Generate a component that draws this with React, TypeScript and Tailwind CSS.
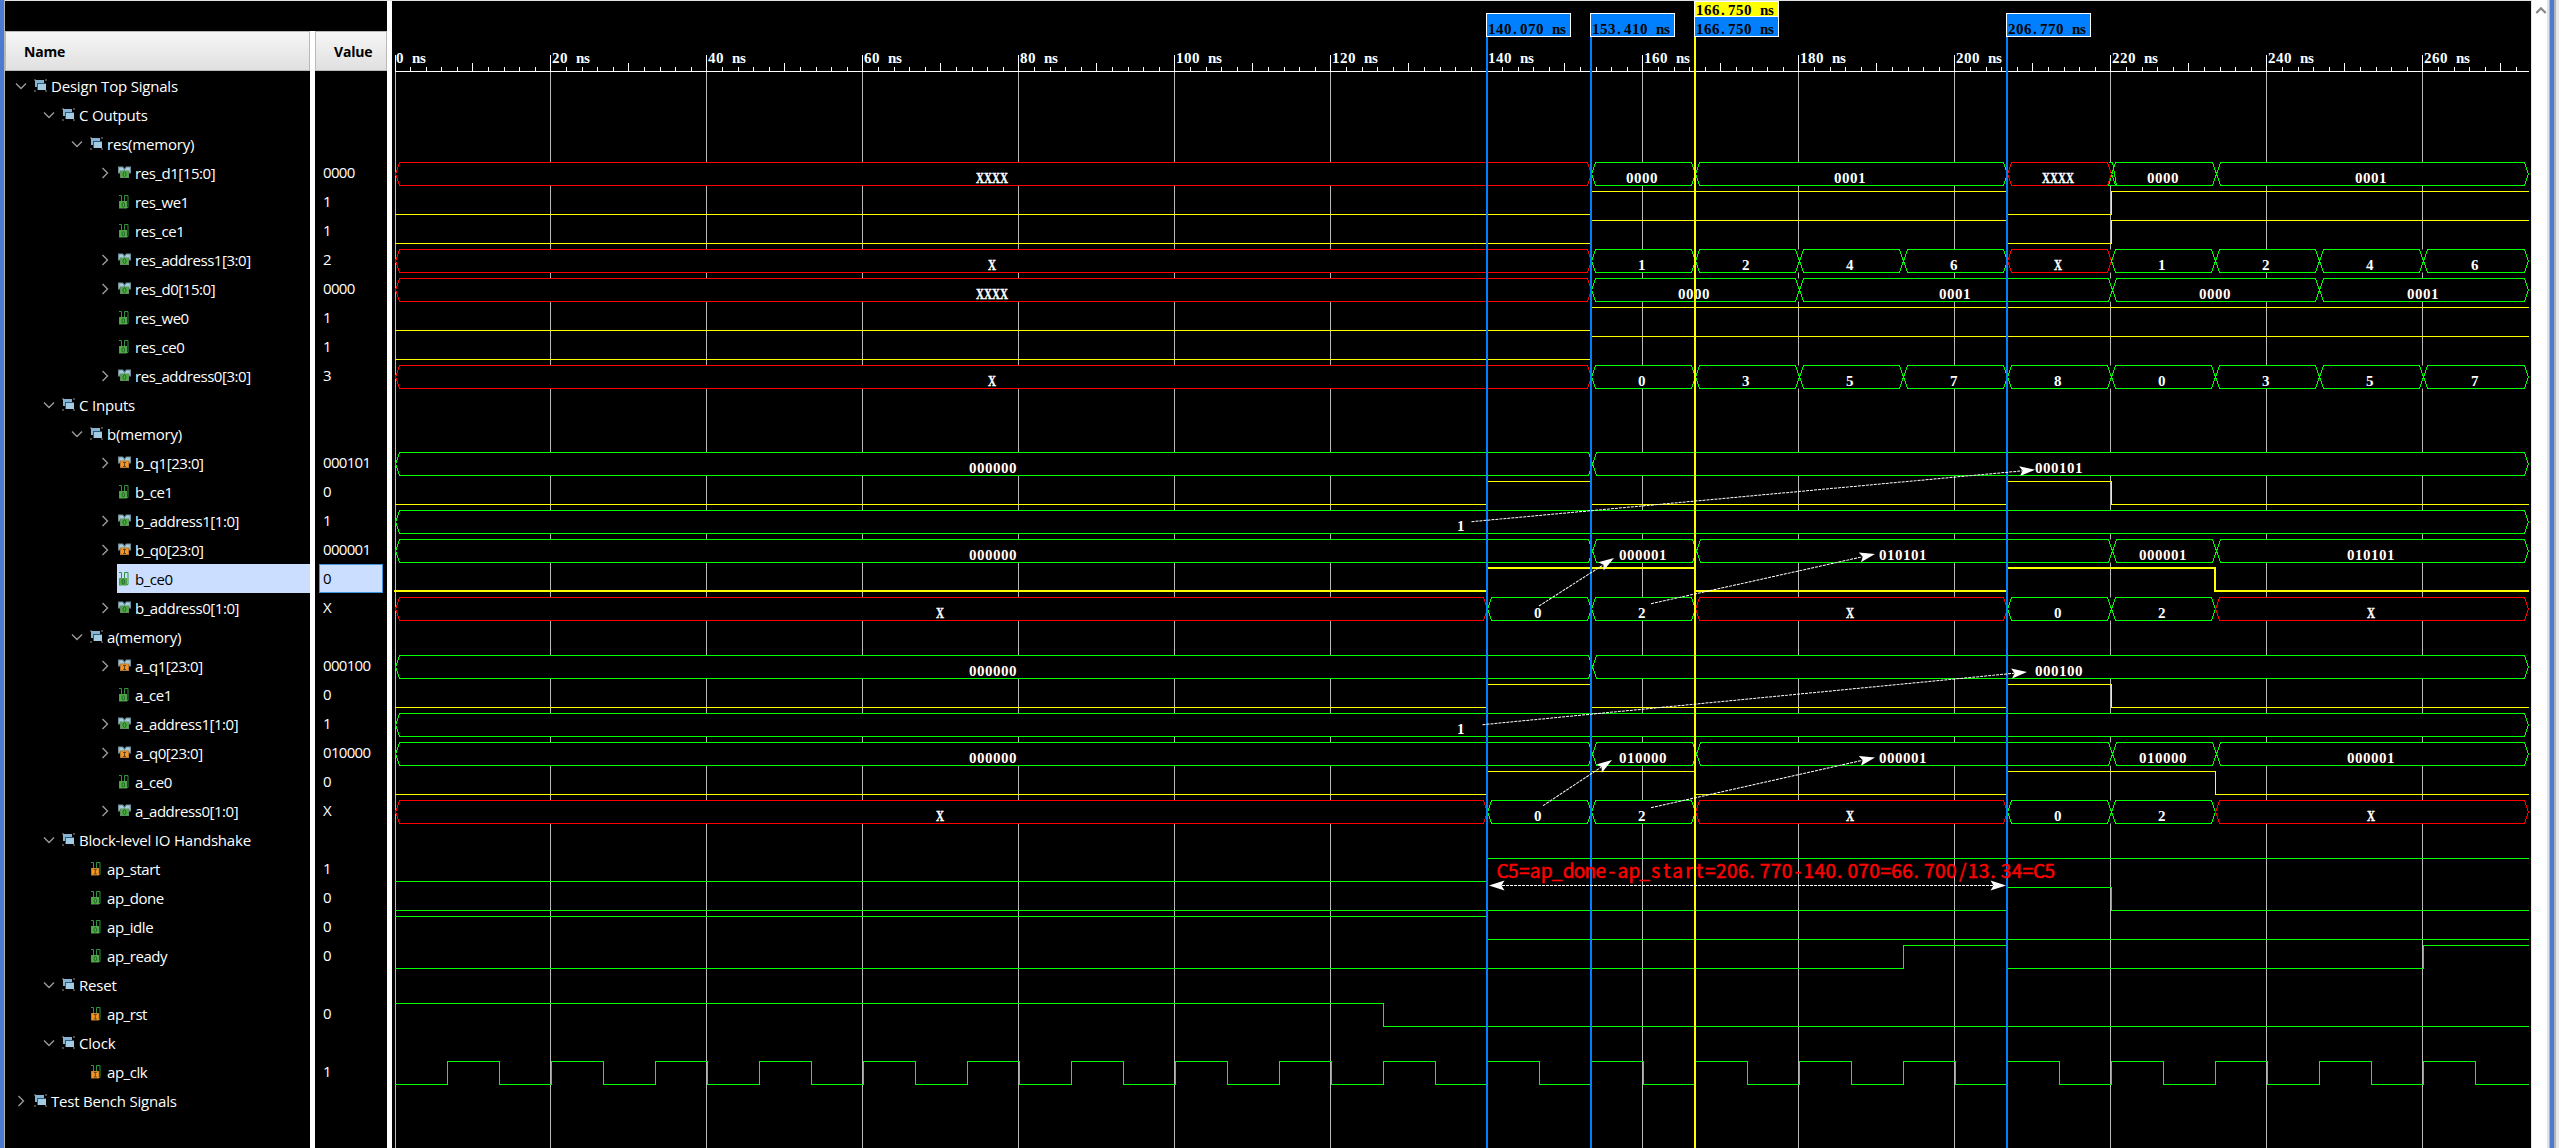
import React from "react";

type Icon = "group" | "busOut" | "busIn" | "bitOut" | "bitIn";
type Seg = { end: number; v: string; x?: boolean };
type Row = {
  name: string;
  level: number;
  icon: Icon;
  value?: string;
  open?: boolean;
  closed?: boolean;
  selected?: boolean;
  bus?: Seg[];
  bit?: { color: string; init: 0 | 1; edges: number[] };
};

const X0 = 395;
const END = 2529;
const ROW_H = 29;
const ROW_TOP = 71;
const GREEN = "#00ff00";
const RED = "#ff0000";
const YELLOW = "#ffff00";
const GRID = "#b9b9b9";

const seg = (end: number, v: string): Seg => ({ end, v, x: v.startsWith("X") });
const yBit = (init: 0 | 1, ...edges: number[]) => ({ color: YELLOW, init, edges });
const gBit = (init: 0 | 1, ...edges: number[]) => ({ color: GREEN, init, edges });
const addr0 = [
  seg(1487, "X"), seg(1591, "0"), seg(1695, "2"), seg(2007, "X"),
  seg(2111, "0"), seg(2215, "2"), seg(END, "X"),
];
const q0 = (p: string, q: string) => [
  seg(1592, "000000"), seg(1696, p), seg(2112, q), seg(2216, p), seg(END, q),
];
const steps = (vals: string[]) =>
  vals.map((v, i) => seg(i === vals.length - 1 ? END : 1591 + 104 * i, v));

const rows: Row[] = [
  { name: "Design Top Signals", level: 0, icon: "group", open: true },
  { name: "C Outputs", level: 1, icon: "group", open: true },
  { name: "res(memory)", level: 2, icon: "group", open: true },
  {
    name: "res_d1[15:0]", level: 3, icon: "busOut", closed: true, value: "0000",
    bus: [seg(1591, "XXXX"), seg(1695, "0000"), seg(2007, "0001"), seg(2111, "XXXX"), seg(2216, "0000"), seg(END, "0001")],
  },
  { name: "res_we1", level: 3, icon: "bitOut", value: "1", bit: yBit(0, 1591, 2007, 2111) },
  { name: "res_ce1", level: 3, icon: "bitOut", value: "1", bit: yBit(0, 1591, 2007, 2111) },
  {
    name: "res_address1[3:0]", level: 3, icon: "busOut", closed: true, value: "2",
    bus: steps(["X", "1", "2", "4", "6", "X", "1", "2", "4", "6"]),
  },
  {
    name: "res_d0[15:0]", level: 3, icon: "busOut", closed: true, value: "0000",
    bus: [seg(1591, "XXXX"), seg(1799, "0000"), seg(2112, "0001"), seg(2319, "0000"), seg(END, "0001")],
  },
  { name: "res_we0", level: 3, icon: "bitOut", value: "1", bit: yBit(0, 1591) },
  { name: "res_ce0", level: 3, icon: "bitOut", value: "1", bit: yBit(0, 1591) },
  {
    name: "res_address0[3:0]", level: 3, icon: "busOut", closed: true, value: "3",
    bus: steps(["X", "0", "3", "5", "7", "8", "0", "3", "5", "7"]),
  },
  { name: "C Inputs", level: 1, icon: "group", open: true },
  { name: "b(memory)", level: 2, icon: "group", open: true },
  { name: "b_q1[23:0]", level: 3, icon: "busIn", closed: true, value: "000101", bus: [seg(1592, "000000"), seg(END, "000101")] },
  { name: "b_ce1", level: 3, icon: "bitOut", value: "0", bit: yBit(0, 1487, 1591, 2007, 2111) },
  { name: "b_address1[1:0]", level: 3, icon: "busOut", closed: true, value: "1", bus: [seg(END, "1")] },
  { name: "b_q0[23:0]", level: 3, icon: "busIn", closed: true, value: "000001", bus: q0("000001", "010101") },
  { name: "b_ce0", level: 3, icon: "bitOut", value: "0", selected: true, bit: yBit(0, 1487, 1695, 2007, 2215) },
  { name: "b_address0[1:0]", level: 3, icon: "busOut", closed: true, value: "X", bus: addr0 },
  { name: "a(memory)", level: 2, icon: "group", open: true },
  { name: "a_q1[23:0]", level: 3, icon: "busIn", closed: true, value: "000100", bus: [seg(1592, "000000"), seg(END, "000100")] },
  { name: "a_ce1", level: 3, icon: "bitOut", value: "0", bit: yBit(0, 1487, 1591, 2007, 2111) },
  { name: "a_address1[1:0]", level: 3, icon: "busOut", closed: true, value: "1", bus: [seg(END, "1")] },
  { name: "a_q0[23:0]", level: 3, icon: "busIn", closed: true, value: "010000", bus: q0("010000", "000001") },
  { name: "a_ce0", level: 3, icon: "bitOut", value: "0", bit: yBit(0, 1487, 1695, 2007, 2215) },
  { name: "a_address0[1:0]", level: 3, icon: "busOut", closed: true, value: "X", bus: addr0 },
  { name: "Block-level IO Handshake", level: 1, icon: "group", open: true },
  { name: "ap_start", level: 2, icon: "bitIn", value: "1", bit: gBit(0, 1487) },
  { name: "ap_done", level: 2, icon: "bitOut", value: "0", bit: gBit(0, 2007, 2111) },
  { name: "ap_idle", level: 2, icon: "bitOut", value: "0", bit: gBit(1, 1487) },
  { name: "ap_ready", level: 2, icon: "bitOut", value: "0", bit: gBit(0, 1903, 2007, 2423) },
  { name: "Reset", level: 1, icon: "group", open: true },
  { name: "ap_rst", level: 2, icon: "bitIn", value: "0", bit: gBit(1, 1383) },
  { name: "Clock", level: 1, icon: "group", open: true },
  {
    name: "ap_clk", level: 2, icon: "bitIn", value: "1",
    bit: gBit(0, ...Array.from({ length: 40 }, (_, i) => X0 + 52 * (i + 1))),
  },
  { name: "Test Bench Signals", level: 0, icon: "group", closed: true },
];

function SignalIcon({ icon }: { icon: Icon }) {
  if (icon === "group") {
    return (
      <svg width="13" height="13" viewBox="0 0 13 13" className="shrink-0">
        <path d="M0 0h2v2H0zM11 0h2v2h-2zM0 11h2v2H0zM11 11h2v2h-2z" fill="#4a4a4a" />
        <rect x="1" y="1" width="9" height="7" fill="#86b3d1" />
        <rect x="3" y="4" width="9" height="7" fill="#2f5878" />
        <rect x="4" y="5" width="8" height="6" fill="#a3cbe2" />
      </svg>
    );
  }
  const out = icon === "busOut" || icon === "bitOut";
  const fill = out ? "#4caf3f" : "#f7941d";
  const edge = out ? "#5d8f5f" : "#b87a30";
  const ink = out ? "#25602a" : "#5a4630";
  if (icon === "busOut" || icon === "busIn") {
    return (
      <svg width="13" height="13" viewBox="0 0 13 13" className="shrink-0">
        <path d="M0 .5h5l1.5 2 1.5-2h5v7h-2v2H2v-2H0z" fill="#6f8b96" />
        <path d="M1.2 1.5h3.2l1.6 2.3v2H1.2zM11.8 1.5H8.600L7 3.800v2h4.800z" fill="#a5cde0" />
        <rect x="2" y="4.500" width="9" height="7.500" fill={edge} />
        <rect x="3" y="5.500" width="7" height="5.500" fill={fill} />
        {out ? (
          <ellipse cx="6.500" cy="8.200" rx="1.500" ry="2.300" fill="none" stroke={ink} />
        ) : (
          <path d="M5 6.500h3M6.500 6.500v4M5 10.500h3" stroke={ink} fill="none" />
        )}
      </svg>
    );
  }
  return (
    <svg width="13" height="14" viewBox="0 0 13 14" className="shrink-0">
      <path d="M1 .5h2.500v6M6.500 7V.5h3.500v12H8" fill="none" stroke="#2f9440" />
      <rect x="1" y="6" width="8" height="7.500" fill={edge} />
      <rect x="2" y="6.500" width="6.500" height="6.500" fill={fill} />
      {out ? (
        <ellipse cx="5.300" cy="9.800" rx="1.300" ry="2.300" fill="none" stroke={ink} />
      ) : (
        <path d="M3.800 7.500h3M5.300 7.500v4.500M3.800 12h3" stroke={ink} fill="none" />
      )}
    </svg>
  );
}

function Chevron({ open }: { open: boolean }) {
  return (
    <svg width="12" height="12" viewBox="0 0 12 12" className="shrink-0">
      <path
        d={open ? "M1 3.500l5 5 5-5" : "M3.500 1l5 5-5 5"}
        fill="none" stroke="#9a9a9a" strokeWidth="1.400"
      />
    </svg>
  );
}

const PADS = ["pl-[10px]", "pl-[38px]", "pl-[66px]", "pl-[94px]"];

function NameRow({ row }: { row: Row }) {
  return (
    <div className={`flex h-[29px] items-stretch ${PADS[row.level]}`}>
      <div className="flex w-[18px] shrink-0 items-center">
        {(row.open || row.closed) && <Chevron open={!!row.open} />}
      </div>
      <div
        className={`flex grow items-center gap-[4px] pl-[1px] whitespace-pre ${
          row.selected ? "bg-[#cbdeff] text-black" : "text-white"
        }`}
      >
        <SignalIcon icon={row.icon} />
        <span className={`pt-[1px] leading-[20px] ${row.icon === "group" ? "tracking-[-0.2px]" : "tracking-[-0.45px]"}`}>
          {row.name}
        </span>
      </div>
    </div>
  );
}

function ValueRow({ row }: { row: Row }) {
  return (
    <div className="flex h-[29px] pr-[4px] pl-[4px]">
      <div
        className={`flex grow items-center border pl-[3px] tracking-[-0.7px] ${
          row.selected ? "border-[#3f94dc] bg-[#cbdeff] text-black" : "border-transparent text-white"
        }`}
      >
        {row.value}
      </div>
    </div>
  );
}

/** Text on an 8px character grid. */
function CellText({ x, y, children, fill = "#fff" }: { x: number; y: number; children: string; fill?: string }) {
  const xs = children.split("").map((c, i) => x + i * 8 + (c === "." ? 1 : 0)).join(" ");
  return (
    <text x={xs} y={y} fill={fill} xmlSpace="preserve" className="font-['Liberation_Serif',serif] text-[15px] font-bold">
      {children}
    </text>
  );
}

function Bus({ top, segs }: { top: number; segs: Seg[] }) {
  const a = top + 4.5;
  const b = top + 27.5;
  const m = top + 16;
  return (
    <g>
      <rect x={X0 + 2} y={a} width={END - X0 - 4} height={23} fill="#000" />
      {segs.map((s, i) => {
        const l = (i ? segs[i - 1].end : X0) + 0.5;
        const r = s.end + (s.end === END ? -0.5 : 0.5);
        const w = s.v.length * 8;
        const cx = Math.floor((l + r) / 2) - 1;
        return (
          <g key={i}>
            <path
              d={`M${l} ${m}L${l + 4} ${a}H${r - 4}L${r} ${m}L${r - 4} ${b}H${l + 4}Z`}
              fill="none" stroke={s.x ? RED : GREEN} shapeRendering="crispEdges"
            />
            {s.x ? (
              <text
                x={cx - w / 2} y={top + 25} textLength={w} lengthAdjust="spacingAndGlyphs"
                fill="#fff" stroke="#fff" strokeWidth={0.4}
                className="font-['Liberation_Serif',serif] text-[15px] font-bold"
              >
                {s.v}
              </text>
            ) : (
              <CellText x={cx - w / 2} y={top + 25}>{s.v}</CellText>
            )}
          </g>
        );
      })}
    </g>
  );
}

function Bit({ top, bit, selected }: { top: number; bit: NonNullable<Row["bit"]>; selected?: boolean }) {
  const off = selected ? 0 : 0.5;
  let level = bit.init;
  const y = () => top + (level ? 4 : 27) + off;
  let d = `M${selected ? X0 - 1 : X0} ${y()}`;
  bit.edges.forEach((e) => {
    d += `H${e + off}`;
    level = level ? 0 : 1;
    d += `V${y()}`;
  });
  d += `H${END}`;
  return <path d={d} fill="none" stroke={bit.color} strokeWidth={selected ? 2 : 1} shapeRendering="crispEdges" />;
}

function Ruler() {
  const items: React.ReactNode[] = [];
  for (let n = 0; n < 14; n++) {
    const base = 394 + 156 * n;
    for (let k = 0; k < 10; k++) {
      const x = n === 0 && k === 0 ? X0 : base + Math.ceil(15.6 * k - 0.001);
      if (x > END) continue;
      const t = k === 0 ? 55 : k === 5 ? 63 : 67;
      items.push(<rect key={`${n}-${k}`} x={x} y={t} width={1} height={71 - t} fill="#fff" />);
    }
    items.push(<CellText key={`t${n}`} x={base + 2} y={63}>{`${n * 20} ns`}</CellText>);
  }
  return (
    <g>
      {items}
      <rect x={X0} y={71} width={END - X0} height={1} fill="#fff" />
    </g>
  );
}

function Arrow({ x1, y1, x2, y2, both }: { x1: number; y1: number; x2: number; y2: number; both?: boolean }) {
  const len = Math.hypot(x2 - x1, y2 - y1);
  const deg = (Math.atan2(y2 - y1, x2 - x1) * 180) / Math.PI;
  return (
    <g transform={`translate(${x1} ${y1}) rotate(${deg})`}>
      <path d={`M${both ? 13 : 0} 0H${len - 13}`} stroke="#fff" strokeDasharray="3 1" />
      <path d={`M${len} 0l-15.500-5 3 5-3 5z`} fill="#fff" />
      {both && <path d="M0 0l15.500-5-3 5 3 5z" fill="#fff" />}
    </g>
  );
}

function Marker({ x, label, top = 13 }: { x: number; label: string; top?: number }) {
  return (
    <g>
      <rect x={x} y={36} width={2} height={1112} fill="#0080ff" />
      <rect x={x + 0.5} y={top + 0.5} width={84} height={36 - top} fill="#0080ff" stroke="#fff" />
      <CellText x={x + 2} y={34} fill="#000">{label}</CellText>
    </g>
  );
}

const NOTE = "C5=ap_done-ap_start=206.770-140.070=66.700/13.34=C5";
const NOTE_SHIFT: Record<string, number> = { "-": 2, t: 2, r: 2, "/": 2, s: 1, ".": 0.5, C: -0.5 };

/** Red measurement note, one character per 10.95px cell. */
function Note() {
  const xs = NOTE.split("").map((c, i) => (1497 + i * 10.95 + (NOTE_SHIFT[c] ?? 0)).toFixed(2)).join(" ");
  return (
    <text
      x={xs} y={877.500} fill={RED} stroke={RED} strokeWidth={0.500}
      className="font-['Noto_Sans_CJK_SC',sans-serif] text-[19px]"
    >
      {NOTE}
    </text>
  );
}

function Waveform() {
  return (
    <svg width="2139" height="1147" viewBox="392 1 2139 1147" className="block shrink-0 bg-black">
      <rect x={X0} y={72} width={1} height={1076} fill={GRID} />
      {Array.from({ length: 13 }, (_, i) => (
        <rect key={i} x={550 + 156 * i} y={72} width={1} height={1076} fill={GRID} />
      ))}
      <Ruler />
      {rows.map((r, i) => {
        const top = ROW_TOP + ROW_H * i;
        if (r.bus) return <Bus key={i} top={top} segs={r.bus} />;
        if (r.bit) return <Bit key={i} top={top} bit={r.bit} selected={r.selected} />;
        return null;
      })}
      <path d="M2108.500 162.500h4l4 23h-8l7-23" fill="none" stroke={GREEN} shapeRendering="crispEdges" />
      <path d="M2107.500 162.500l4 11.500l-4 11.500" fill="none" stroke={RED} shapeRendering="crispEdges" />

      <Marker x={1486} label="140.070 ns" />
      <Marker x={1590} label="153.410 ns" />
      <Marker x={2006} label="206.770 ns" />
      <Marker x={1694} label="166.750 ns" top={16} />
      <rect x={1694.500} y={1.500} width={84} height={15} fill={YELLOW} stroke="#fff" />
      <CellText x={1696} y={15} fill="#000">166.750 ns</CellText>
      <rect x={1694} y={37} width={2} height={1111} fill={YELLOW} />

      <Arrow x1={1471.500} y1={521.700} x2={2035} y2={469.700} />
      <Arrow x1={1539} y1={606} x2={1614} y2={558} />
      <Arrow x1={1651} y1={603.700} x2={1875} y2={554} />
      <Arrow x1={1482.500} y1={724.700} x2={2027} y2={672} />
      <Arrow x1={1543} y1={805.700} x2={1612} y2={760} />
      <Arrow x1={1651} y1={807.700} x2={1875} y2={757.500} />
      <Arrow x1={1489} y1={885.500} x2={2006} y2={885.500} both />
      <Note />
    </svg>
  );
}

const HEADER =
  "flex h-[40px] items-center border border-[#b9b9b9] bg-linear-to-b from-[#f6f6f6] to-[#e0e0e0] text-[14px] font-bold tracking-[-0.2px] text-black";

export default function App() {
  return (
    <div className="flex h-[1148px] w-[2559px] overflow-hidden bg-black font-['Open_Sans','Noto_Sans',sans-serif] text-[15px]">
      <div className="w-[5px] shrink-0 border-r border-[#b5b5b5] bg-[#4b7bd1]" />
      <div className="flex w-[2526px] shrink-0 border-t border-[#e3e3e3]">
        <div className="w-[382px] shrink-0 pt-[30px]">
          <div className="flex h-[1117px]">
            <div className="w-[305px] shrink-0">
              <div className={`${HEADER} pl-[18px]`}>Name</div>
              {rows.map((r, i) => <NameRow key={i} row={r} />)}
            </div>
            <div className="w-[5px] shrink-0 bg-white" />
            <div className="w-[72px] shrink-0">
              <div className={`${HEADER} pl-[18px]`}>Value</div>
              {rows.map((r, i) => <ValueRow key={i} row={r} />)}
            </div>
          </div>
        </div>
        <div className="w-[5px] shrink-0 bg-white" />
        <Waveform />
      </div>
      <div className="flex w-[18px] shrink-0 justify-center border-r-2 border-l border-r-[#e2e2e2] border-l-[#e6e6e6] bg-white pt-[4px]">
        <svg width="14" height="12" viewBox="0 0 14 12" className="ml-[3px]">
          <path d="M1.500 9.500L7 4l5.500 5.500" fill="none" stroke="#858585" strokeWidth="2.600" />
        </svg>
      </div>
      <div className="w-px bg-[#b4b4b4]" />
      <div className="w-[4px] bg-[#4b7bd1]" />
      <div className="w-[2px] bg-[#b4b4b4]" />
      <div className="w-[3px] bg-[#e8e8e8]" />
    </div>
  );
}
